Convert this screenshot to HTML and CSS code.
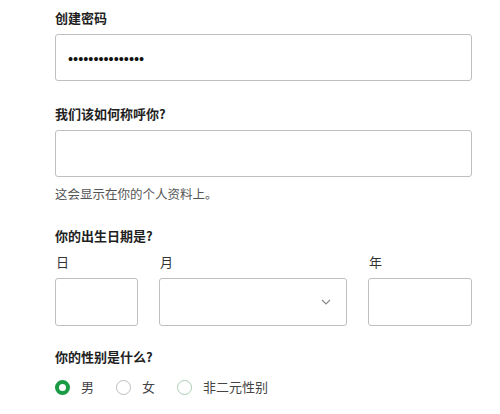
FILE: index.html
```html
<!DOCTYPE html>
<html lang="zh">
<head>
<meta charset="utf-8">
<link rel="stylesheet" href="styles.css">
</head>
<body>
<form class="form">
  <div class="field">
    <label class="label">创建密码</label>
    <div class="input"><span class="dots">•••••••••••••••</span></div>
  </div>
  <div class="field field-name">
    <label class="label">我们该如何称呼你?</label>
    <div class="input"></div>
    <p class="hint">这会显示在你的个人资料上。</p>
  </div>
  <div class="field field-birth">
    <label class="label">你的出生日期是?</label>
    <div class="date-row">
      <div class="date-col col-day">
        <span class="sublabel">日</span>
        <div class="input input-date"></div>
      </div>
      <div class="date-col col-month">
        <span class="sublabel">月</span>
        <div class="input input-date select">
          <svg class="chevron" width="10" height="6" viewBox="0 0 10 6"><path d="M1 1 L5 5 L9 1" fill="none" stroke="#8a8a8a" stroke-width="1.2"/></svg>
        </div>
      </div>
      <div class="date-col col-year">
        <span class="sublabel">年</span>
        <div class="input input-date"></div>
      </div>
    </div>
  </div>
  <div class="field field-gender">
    <label class="label">你的性别是什么?</label>
    <div class="radios">
      <span class="radio-item"><span class="radio checked"></span><span class="radio-text">男</span></span>
      <span class="radio-item"><span class="radio"></span><span class="radio-text">女</span></span>
      <span class="radio-item"><span class="radio soft"></span><span class="radio-text">非二元性别</span></span>
    </div>
  </div>
</form>
</body>
</html>
```
FILE: styles.css
```css
html, body {
  margin: 0;
  padding: 0;
  background: #ffffff;
}
body {
  font-family: "Noto Sans CJK SC", "Liberation Sans", sans-serif;
  color: #222222;
}
.form {
  width: 417px;
  padding: 8px 0 0 55px;
}
.field {
  display: flex;
  flex-direction: column;
}
.label {
  font-size: 13px;
  font-weight: 700;
  line-height: 20px;
  height: 20px;
  color: #1f1f1f;
}
.input {
  box-sizing: border-box;
  margin-top: 6px;
  height: 47px;
  border: 1.5px solid #bfbfbf;
  border-radius: 3px;
  background: #fff;
  display: flex;
  align-items: center;
  padding-left: 12px;
}
.dots {
  font-family: "Liberation Sans", sans-serif;
  font-size: 14.5px;
  color: #111;
  line-height: 1;
  padding-top: 3px;
}
.field-name {
  margin-top: 23px;
}
.hint {
  margin: 8px 0 0;
  font-size: 12.5px;
  line-height: 18px;
  color: #555555;
}
.field-birth {
  margin-top: 23px;
}
.date-row {
  display: flex;
  gap: 21px;
  margin-top: 7px;
}
.date-col {
  display: flex;
  flex-direction: column;
}
.col-day { width: 83px; }
.col-month { width: 188px; }
.col-year { width: 104px; }
.sublabel {
  font-size: 13px;
  line-height: 18px;
  height: 18px;
  color: #333;
  padding-left: 1px;
}
.input-date {
  margin-top: 7px;
  height: 48px;
}
.select {
  justify-content: flex-end;
  padding-right: 15px;
}
.chevron {
  display: block;
}
.field-gender {
  margin-top: 21px;
}
.radios {
  display: flex;
  align-items: center;
  margin-top: 10px;
  height: 20px;
}
.radio-item {
  display: flex;
  align-items: center;
  margin-right: 22px;
}
.radio {
  box-sizing: border-box;
  width: 15px;
  height: 15px;
  border-radius: 50%;
  border: 1.2px solid #bdbdbd;
  margin-right: 11px;
}
.radio.checked {
  border: 4px solid #1b9a46;
}
.radio.soft {
  border-color: #aacdb6;
}
.radio-text {
  font-size: 13px;
  line-height: 20px;
  color: #444;
}
```
